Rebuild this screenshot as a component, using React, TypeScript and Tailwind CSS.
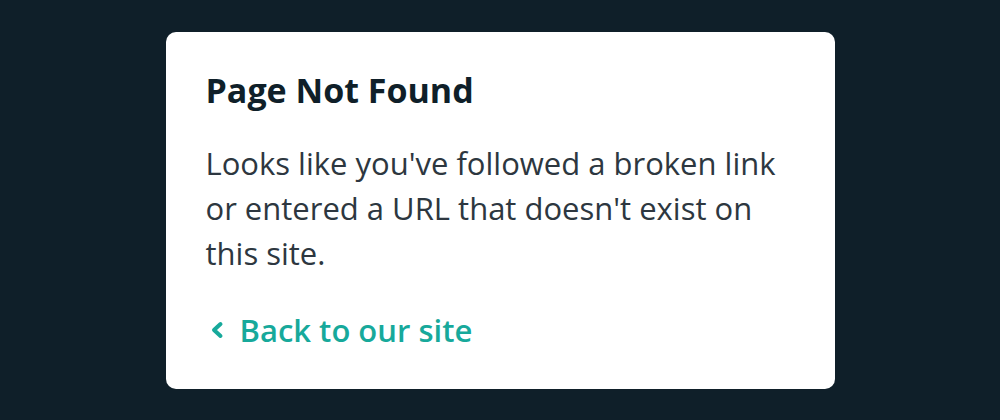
import React from 'react';

const App = () => {
  return (
    <div
      className="min-h-screen h-[420px] bg-[#0f1f29] flex items-center justify-center"
      style={{ fontFamily: '"Open Sans", "Noto Sans", sans-serif' }}
    >
      <div className="w-[669px] h-[357px] bg-white rounded-[10px] px-10 pt-[38px]">
        <h1 className="text-[34px] leading-[41px] font-bold text-[#0f1f29]">Page Not Found</h1>
        <p className="mt-[30px] text-[31px] leading-[45px] text-[#2d3740]">
          Looks like you've followed a broken link or entered a URL that doesn't exist on this site.
        </p>
        <a href="#" className="mt-[32px] flex items-center text-[31px] leading-[45px] font-semibold text-[#17a99b]">
          <svg width="14" height="18" viewBox="0 0 14 18" className="ml-[4px] mr-[16px]">
            <polyline points="10.5,3 4,9 10.5,15" fill="none" stroke="currentColor" strokeWidth="4" strokeLinecap="round" strokeLinejoin="round" />
          </svg>
          <span>Back to our site</span>
        </a>
      </div>
    </div>
  );
};

export default App;
